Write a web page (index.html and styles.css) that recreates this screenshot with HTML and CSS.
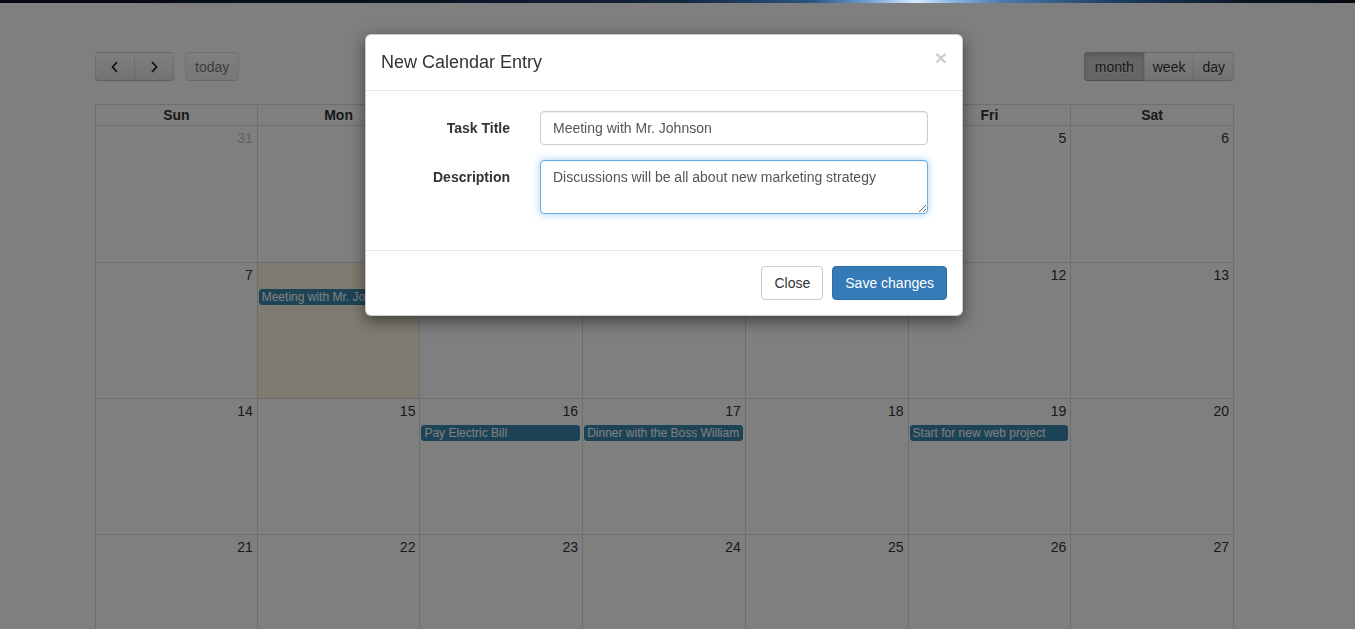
FILE: index.html
```html
<!DOCTYPE html>
<html lang="en">
<head>
<meta charset="utf-8">
<title>Calendar</title>
<link rel="stylesheet" href="styles.css">
</head>
<body>
<div class="topstrip"></div>
<div class="page">
  <div class="toolbar">
    <div class="tb-left">
      <div class="btn-group">
        <button class="fc-btn fc-icon-btn" aria-label="prev"><svg width="12" height="12" viewBox="0 0 12 12"><path d="M8 1 L3.5 6 L8 11" fill="none" stroke="#1a1a1a" stroke-width="1.7"/></svg></button>
        <button class="fc-btn fc-icon-btn" aria-label="next"><svg width="12" height="12" viewBox="0 0 12 12"><path d="M4 1 L8.5 6 L4 11" fill="none" stroke="#1a1a1a" stroke-width="1.7"/></svg></button>
      </div>
      <button class="fc-btn fc-single disabled">today</button>
    </div>
    <div class="btn-group">
      <button class="fc-btn fc-month active">month</button>
      <button class="fc-btn">week</button>
      <button class="fc-btn">day</button>
    </div>
  </div>

  <div class="cal">
    <div class="cal-row cal-head">
      <div class="hcell">Sun</div><div class="hcell">Mon</div><div class="hcell">Tue</div><div class="hcell">Wed</div><div class="hcell">Thu</div><div class="hcell">Fri</div><div class="hcell">Sat</div>
    </div>
    <div class="cal-row first-week">
      <div class="day"><div class="num other">31</div></div>
      <div class="day"><div class="num">1</div></div>
      <div class="day"><div class="num">2</div></div>
      <div class="day"><div class="num">3</div></div>
      <div class="day"><div class="num">4</div></div>
      <div class="day"><div class="num">5</div></div>
      <div class="day"><div class="num">6</div></div>
    </div>
    <div class="cal-row">
      <div class="day"><div class="num">7</div></div>
      <div class="day today"><div class="num">8</div><div class="event">Meeting with Mr. Johnson</div></div>
      <div class="day"><div class="num">9</div></div>
      <div class="day"><div class="num">10</div></div>
      <div class="day"><div class="num">11</div></div>
      <div class="day"><div class="num">12</div></div>
      <div class="day"><div class="num">13</div></div>
    </div>
    <div class="cal-row">
      <div class="day"><div class="num">14</div></div>
      <div class="day"><div class="num">15</div></div>
      <div class="day"><div class="num">16</div><div class="event">Pay Electric Bill</div></div>
      <div class="day"><div class="num">17</div><div class="event">Dinner with the Boss William</div></div>
      <div class="day"><div class="num">18</div></div>
      <div class="day"><div class="num">19</div><div class="event">Start for new web project</div></div>
      <div class="day"><div class="num">20</div></div>
    </div>
    <div class="cal-row">
      <div class="day"><div class="num">21</div></div>
      <div class="day"><div class="num">22</div></div>
      <div class="day"><div class="num">23</div></div>
      <div class="day"><div class="num">24</div></div>
      <div class="day"><div class="num">25</div></div>
      <div class="day"><div class="num">26</div></div>
      <div class="day"><div class="num">27</div></div>
    </div>
  </div>
</div>

<div class="backdrop"></div>

<div class="modal">
  <div class="modal-header">
    <h4 class="modal-title">New Calendar Entry</h4>
    <button class="close" aria-label="Close">&times;</button>
  </div>
  <div class="modal-body">
    <div class="form-group">
      <label class="form-label">Task Title</label>
      <input class="form-control" type="text" value="Meeting with Mr. Johnson">
    </div>
    <div class="form-group">
      <label class="form-label">Description</label>
      <textarea class="form-control focus" rows="2">Discussions will be all about new marketing strategy</textarea>
    </div>
  </div>
  <div class="modal-footer">
    <button class="btn btn-default">Close</button>
    <button class="btn btn-primary">Save changes</button>
  </div>
</div>
</body>
</html>
```

FILE: styles.css
```css
* { box-sizing: border-box; }

html, body {
  margin: 0;
  height: 629px;
  overflow: hidden;
}

body {
  font-family: "Liberation Sans", Arial, Helvetica, sans-serif;
  font-size: 14px;
  color: #333;
  background: #fff;
}

.topstrip {
  position: relative;
  z-index: 30;
  height: 3px;
  background: linear-gradient(to right, #05080e 0%, #0a1220 30%, #14253d 50%, #2c5583 60%, #6c9fd2 64%, #d8ecff 67.5%, #8fbbe6 70%, #4a7aab 74%, #1f3f63 82%, #0b1522 92%, #06090f 100%);
}

.page {
  width: 1139px;
  margin-left: 95px;
  padding-top: 49px;
}

/* Toolbar */
.toolbar {
  display: flex;
  justify-content: space-between;
  align-items: center;
  height: 29px;
  margin-bottom: 23px;
}

.tb-left {
  display: flex;
  align-items: center;
  gap: 11px;
}

.btn-group {
  display: flex;
}

.fc-btn {
  height: 29px;
  padding: 0 8px;
  margin: 0 0 0 -1px;
  font-family: inherit;
  font-size: 14px;
  color: #333;
  border: 1px solid;
  border-color: rgba(0,0,0,.1) rgba(0,0,0,.1) rgba(0,0,0,.25);
  background-color: #f5f5f5;
  background-image: linear-gradient(to bottom, #fff, #e6e6e6);
  text-shadow: 0 1px 1px rgba(255,255,255,.75);
  box-shadow: inset 0 1px 0 rgba(255,255,255,.2), 0 1px 2px rgba(0,0,0,.05);
  border-radius: 0;
  display: flex;
  align-items: center;
  justify-content: center;
}

.btn-group .fc-btn:first-child {
  margin-left: 0;
  border-radius: 4px 0 0 4px;
}

.btn-group .fc-btn:last-child {
  border-radius: 0 4px 4px 0;
}

.fc-single {
  border-radius: 4px;
  margin: 0;
  padding: 0 9px;
}

.fc-month {
  padding: 0 10px;
}

.fc-icon-btn {
  width: 40px;
  padding: 0;
}

.fc-btn.active {
  background-color: #ccc;
  background-image: none;
  box-shadow: inset 0 2px 4px rgba(0,0,0,.15), 0 1px 2px rgba(0,0,0,.05);
}

.fc-btn.disabled {
  opacity: .65;
  box-shadow: none;
}

/* Calendar grid */
.cal {
  border-top: 1px solid #ddd;
}

.cal-row {
  display: grid;
  grid-template-columns: repeat(7, 1fr);
}

.hcell {
  height: 21px;
  line-height: 20px;
  text-align: center;
  font-weight: bold;
  border-right: 1px solid #ddd;
  border-bottom: 1px solid #ddd;
}

.hcell:first-child,
.day:first-child {
  border-left: 1px solid #ddd;
}

.day {
  height: 136px;
  border-right: 1px solid #ddd;
  border-bottom: 1px solid #ddd;
  overflow: hidden;
  min-width: 0;
}

.first-week .day {
  height: 137px;
}

.day.today {
  background: #fcf8e3;
}

.num {
  text-align: right;
  padding: 2px 4px;
  line-height: 20px;
}

.num.other {
  opacity: .3;
}

.event {
  margin: 2px 2px 0 1px;
  padding: 0 2px;
  font-size: 12px;
  line-height: 14px;
  color: #fff;
  background: #3a87ad;
  border: 1px solid #3a87ad;
  border-radius: 3px;
  white-space: nowrap;
  overflow: hidden;
}

/* Backdrop */
.backdrop {
  position: fixed;
  inset: 0;
  background: #000;
  opacity: .5;
  z-index: 10;
}

/* Modal */
.modal {
  position: absolute;
  z-index: 20;
  left: 365px;
  top: 34px;
  width: 598px;
  background: #fff;
  border: 1px solid rgba(0,0,0,.2);
  border-radius: 6px;
  box-shadow: 0 5px 15px rgba(0,0,0,.5);
}

.modal-header {
  display: flex;
  justify-content: space-between;
  align-items: flex-start;
  padding: 15px;
  border-bottom: 1px solid #e5e5e5;
}

.modal-title {
  margin: 0;
  font-size: 18px;
  font-weight: normal;
  line-height: 25px;
  color: #333;
}

.close {
  padding: 0;
  margin: -3px 0 0 0;
  background: transparent;
  border: 0;
  font-family: inherit;
  font-size: 21px;
  font-weight: bold;
  line-height: 1;
  color: #000;
  text-shadow: 0 1px 0 #fff;
  opacity: .2;
}

.modal-body {
  padding: 20px 34px 21px 15px;
}

.form-group {
  display: grid;
  grid-template-columns: 129px 1fr;
  column-gap: 30px;
  margin-bottom: 15px;
}

.form-label {
  text-align: right;
  font-weight: bold;
  padding-top: 7px;
  line-height: 20px;
}

.form-control {
  display: block;
  width: 100%;
  height: 34px;
  padding: 6px 12px;
  font-family: inherit;
  font-size: 14px;
  line-height: 20px;
  color: #555;
  background: #fff;
  border: 1px solid #ccc;
  border-radius: 4px;
  box-shadow: inset 0 1px 1px rgba(0,0,0,.075);
  outline: none;
}

textarea.form-control {
  height: 54px;
  resize: vertical;
}

.form-control.focus {
  border-color: #66afe9;
  box-shadow: inset 0 1px 1px rgba(0,0,0,.075), 0 0 8px rgba(102,175,233,.6);
}

.modal-footer {
  display: flex;
  justify-content: flex-end;
  gap: 9px;
  padding: 15px;
  border-top: 1px solid #e5e5e5;
}

.btn {
  height: 34px;
  padding: 6px 12px;
  font-family: inherit;
  font-size: 14px;
  line-height: 20px;
  border: 1px solid transparent;
  border-radius: 4px;
}

.btn-default {
  color: #333;
  background: #fff;
  border-color: #ccc;
}

.btn-primary {
  color: #fff;
  background: #337ab7;
  border-color: #2e6da4;
}
```
